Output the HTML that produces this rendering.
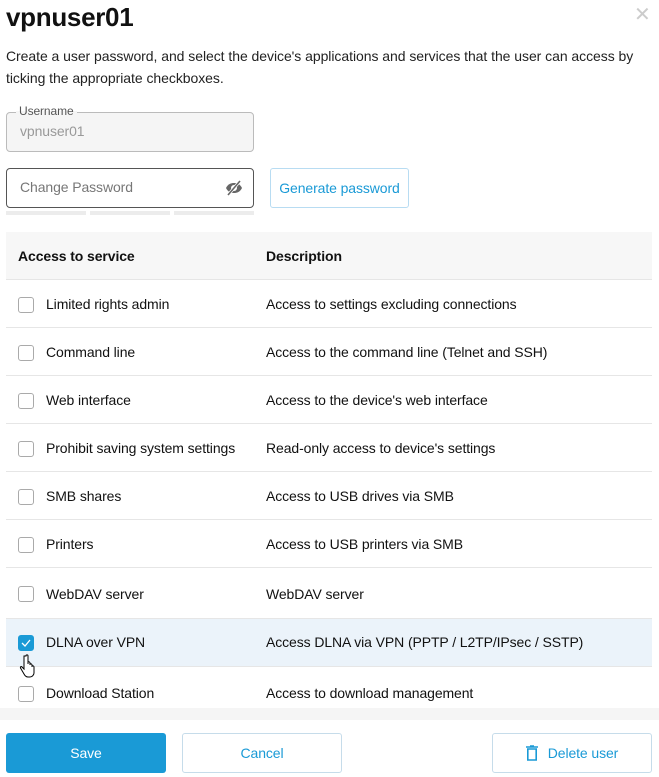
<!DOCTYPE html>
<html><head><meta charset="utf-8"><style>
*{box-sizing:border-box;margin:0;padding:0}
body{width:659px;height:777px;background:#fff;font-family:"Liberation Sans",sans-serif;color:#111;position:relative;overflow:hidden;font-size:14px;letter-spacing:-0.1px}
.abs{position:absolute}
h1{position:absolute;left:6px;top:2px;font-size:26px;font-weight:bold;letter-spacing:-0.3px}
.close{position:absolute;left:634px;top:2px;font-size:20px;color:#ccc}
.desc{position:absolute;left:6px;top:45px;width:650px;line-height:22px;color:#222;letter-spacing:-0.05px}
.field{position:absolute;left:6px;width:248px;height:40px;border-radius:4px}
.btn{position:absolute;height:40px;border-radius:3px;display:flex;align-items:center;justify-content:center;font-size:14px}
.row{position:absolute;left:6px;width:646px;height:48px;border-bottom:1px solid #e6e6e6}
.row span{position:absolute;top:16px}
.row .c1{left:40px}.row .c2{left:260px}
.cb{position:absolute;left:12px;top:17px;width:16px;height:16px;border:1px solid #aaa;border-radius:3px;background:#fff}
</style></head><body>
<h1>vpnuser01</h1>
<div class="close">✕</div>
<div class="desc">Create a user password, and select the device's applications and services that the user can access by ticking the appropriate checkboxes.</div>
<div class="field" style="top:112px;border:1px solid #bbb;background:#f5f5f5"></div>
<div class="abs" style="left:16px;top:104px;padding:0 3px;font-size:12px;color:#555;background:linear-gradient(#fff 50%,#f5f5f5 50%)">Username</div>
<div class="abs" style="left:20px;top:123px;color:#999">vpnuser01</div>
<div class="field" style="top:168px;border:1px solid #555;background:#fff"></div>
<div class="abs" style="left:20px;top:179px;color:#777">Change Password</div>
<svg class="abs" style="left:225px;top:180px" width="18" height="16" viewBox="0 0 18 16"><path d="M1 8c2-4 5-5 8-5s6 1 8 5c-2 4-5 5-8 5S3 12 1 8z" fill="#666"/><circle cx="9" cy="8" r="3" fill="#fff"/><path d="M3 15L15 1" stroke="#fff" stroke-width="3"/><path d="M3 15L15 1" stroke="#666" stroke-width="1.6"/></svg>
<div class="abs" style="left:6px;top:211px;width:80px;height:4px;background:#ececec"></div>
<div class="abs" style="left:90px;top:211px;width:80px;height:4px;background:#ececec"></div>
<div class="abs" style="left:174px;top:211px;width:80px;height:4px;background:#ececec"></div>
<div class="btn" style="left:270px;top:168px;width:139px;border:1px solid #b8dcf2;color:#1a9ad6">Generate password</div>
<div class="row" style="top:232px;background:#f7f7f7;font-weight:bold"><span style="left:12px">Access to service</span><span class="c2">Description</span></div>
<div class="row" style="top:280px"><div class="cb"></div><span class="c1">Limited rights admin</span><span class="c2">Access to settings excluding connections</span></div>
<div class="row" style="top:328px"><div class="cb"></div><span class="c1">Command line</span><span class="c2">Access to the command line (Telnet and SSH)</span></div>
<div class="row" style="top:376px"><div class="cb"></div><span class="c1">Web interface</span><span class="c2">Access to the device's web interface</span></div>
<div class="row" style="top:424px"><div class="cb"></div><span class="c1">Prohibit saving system settings</span><span class="c2">Read-only access to device's settings</span></div>
<div class="row" style="top:472px"><div class="cb"></div><span class="c1">SMB shares</span><span class="c2">Access to USB drives via SMB</span></div>
<div class="row" style="top:520px"><div class="cb"></div><span class="c1">Printers</span><span class="c2">Access to USB printers via SMB</span></div>
<div class="row" style="top:568px;height:51px"><div class="cb" style="top:18px"></div><span class="c1" style="top:18px">WebDAV server</span><span class="c2" style="top:18px">WebDAV server</span></div>
<div class="row" style="top:619px;background:#ebf3fa"><div class="cb" style="top:16px;background:#1a9ad6;border-color:#1a9ad6"><svg width="14" height="14" viewBox="0 0 14 14"><path d="M3 7l3 3 5-6" stroke="#fff" stroke-width="1.3" fill="none"/></svg></div><span class="c1" style="top:15px">DLNA over VPN</span><span class="c2" style="top:15px">Access DLNA via VPN (PPTP / L2TP/IPsec / SSTP)</span></div>
<svg class="abs" style="left:19px;top:654px" width="16" height="26" viewBox="0 0 16 26"><path d="M5 2v13l-2-2c-1-1-2 0-1.5 1l3.5 6c1 2 2 3 4 3h2c2 0 4-2 4-4v-6c0-1-1-1.5-2-1v1-2c0-1-1-1.5-2-1v1-2c0-1-1-1.5-2-1v2-8c0-1.5-2-1.5-2 0z" fill="#fff" stroke="#000" stroke-width="1"/></svg>
<div class="row" style="top:666px;height:42px;border:none"><div class="cb" style="top:20px"></div><span class="c1" style="top:19px">Download Station</span><span class="c2" style="top:19px">Access to download management</span></div>
<div class="abs" style="left:0;top:708px;width:659px;height:12px;background:#f5f5f5"></div>
<div class="btn" style="left:6px;top:733px;width:160px;background:#1a9ad6;color:#fff">Save</div>
<div class="btn" style="left:182px;top:733px;width:160px;border:1px solid #c6dcea;color:#1a9ad6">Cancel</div>
<div class="btn" style="left:492px;top:733px;width:160px;border:1px solid #c6dcea;color:#1a9ad6"><svg width="12" height="16" viewBox="0 0 12 16" style="margin-right:10px"><path d="M0 2h12M4 1h4" stroke="#1a9ad6" stroke-width="1.6"/><path d="M1.8 4h8.4v11H1.8z" fill="none" stroke="#1a9ad6" stroke-width="1.6"/></svg>Delete user</div>
</body></html>
